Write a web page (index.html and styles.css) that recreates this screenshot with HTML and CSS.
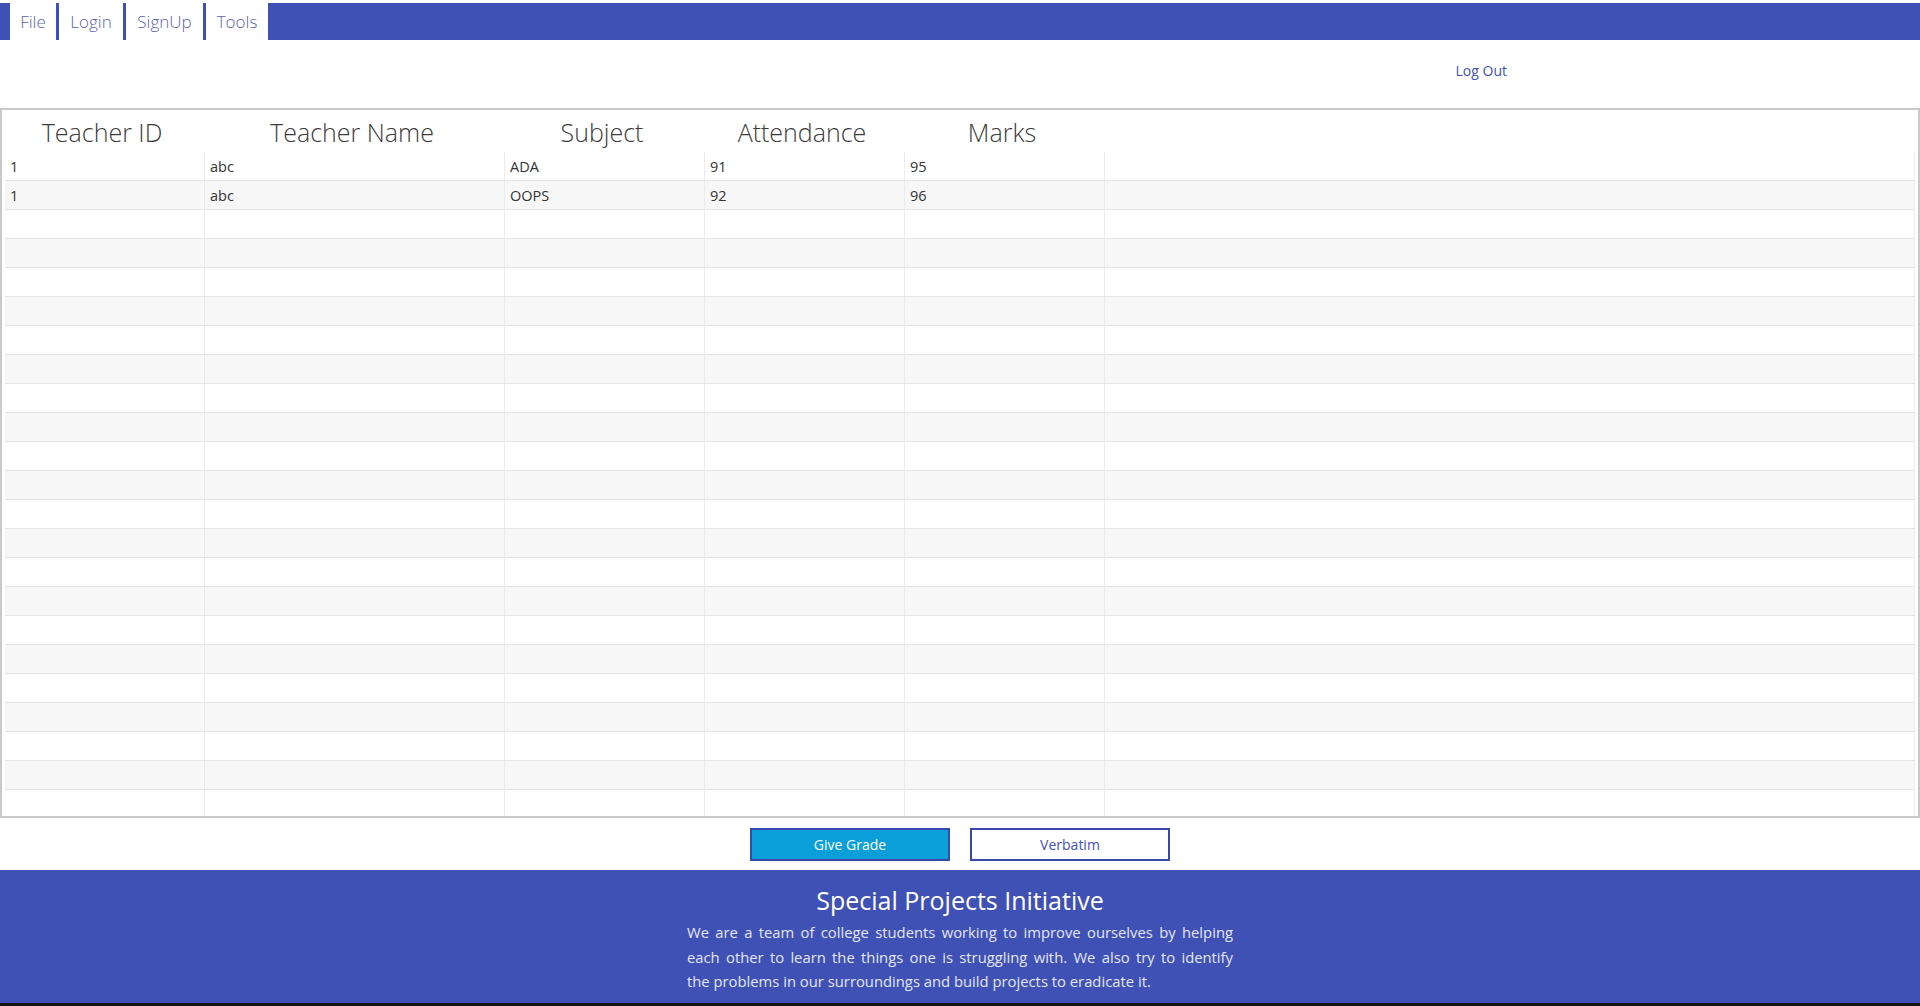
FILE: index.html
```html
<!DOCTYPE html>
<html lang="en">
<head>
<meta charset="utf-8">
<title>Teacher Records</title>
<link rel="stylesheet" href="styles.css">
</head>
<body>
<div class="page">
  <nav class="topnav">
    <a class="tab tab-file">File</a>
    <a class="tab tab-login">Login</a>
    <a class="tab tab-signup">SignUp</a>
    <a class="tab tab-tools">Tools</a>
  </nav>

  <div class="account-bar">
    <a class="logout">Log Out</a>
  </div>

  <section class="grid">
    <div class="grid-head">
      <div class="hcell c1">Teacher ID</div>
      <div class="hcell c2">Teacher Name</div>
      <div class="hcell c3">Subject</div>
      <div class="hcell c4">Attendance</div>
      <div class="hcell c5">Marks</div>
    </div>
    <div class="grid-body">
      <div class="row"><div class="cell c1">1</div><div class="cell c2">abc</div><div class="cell c3">ADA</div><div class="cell c4">91</div><div class="cell c5">95</div><div class="cell c6"></div></div>
      <div class="row"><div class="cell c1">1</div><div class="cell c2">abc</div><div class="cell c3">OOPS</div><div class="cell c4">92</div><div class="cell c5">96</div><div class="cell c6"></div></div>
      <div class="row"><div class="cell c1"></div><div class="cell c2"></div><div class="cell c3"></div><div class="cell c4"></div><div class="cell c5"></div><div class="cell c6"></div></div>
      <div class="row"><div class="cell c1"></div><div class="cell c2"></div><div class="cell c3"></div><div class="cell c4"></div><div class="cell c5"></div><div class="cell c6"></div></div>
      <div class="row"><div class="cell c1"></div><div class="cell c2"></div><div class="cell c3"></div><div class="cell c4"></div><div class="cell c5"></div><div class="cell c6"></div></div>
      <div class="row"><div class="cell c1"></div><div class="cell c2"></div><div class="cell c3"></div><div class="cell c4"></div><div class="cell c5"></div><div class="cell c6"></div></div>
      <div class="row"><div class="cell c1"></div><div class="cell c2"></div><div class="cell c3"></div><div class="cell c4"></div><div class="cell c5"></div><div class="cell c6"></div></div>
      <div class="row"><div class="cell c1"></div><div class="cell c2"></div><div class="cell c3"></div><div class="cell c4"></div><div class="cell c5"></div><div class="cell c6"></div></div>
      <div class="row"><div class="cell c1"></div><div class="cell c2"></div><div class="cell c3"></div><div class="cell c4"></div><div class="cell c5"></div><div class="cell c6"></div></div>
      <div class="row"><div class="cell c1"></div><div class="cell c2"></div><div class="cell c3"></div><div class="cell c4"></div><div class="cell c5"></div><div class="cell c6"></div></div>
      <div class="row"><div class="cell c1"></div><div class="cell c2"></div><div class="cell c3"></div><div class="cell c4"></div><div class="cell c5"></div><div class="cell c6"></div></div>
      <div class="row"><div class="cell c1"></div><div class="cell c2"></div><div class="cell c3"></div><div class="cell c4"></div><div class="cell c5"></div><div class="cell c6"></div></div>
      <div class="row"><div class="cell c1"></div><div class="cell c2"></div><div class="cell c3"></div><div class="cell c4"></div><div class="cell c5"></div><div class="cell c6"></div></div>
      <div class="row"><div class="cell c1"></div><div class="cell c2"></div><div class="cell c3"></div><div class="cell c4"></div><div class="cell c5"></div><div class="cell c6"></div></div>
      <div class="row"><div class="cell c1"></div><div class="cell c2"></div><div class="cell c3"></div><div class="cell c4"></div><div class="cell c5"></div><div class="cell c6"></div></div>
      <div class="row"><div class="cell c1"></div><div class="cell c2"></div><div class="cell c3"></div><div class="cell c4"></div><div class="cell c5"></div><div class="cell c6"></div></div>
      <div class="row"><div class="cell c1"></div><div class="cell c2"></div><div class="cell c3"></div><div class="cell c4"></div><div class="cell c5"></div><div class="cell c6"></div></div>
      <div class="row"><div class="cell c1"></div><div class="cell c2"></div><div class="cell c3"></div><div class="cell c4"></div><div class="cell c5"></div><div class="cell c6"></div></div>
      <div class="row"><div class="cell c1"></div><div class="cell c2"></div><div class="cell c3"></div><div class="cell c4"></div><div class="cell c5"></div><div class="cell c6"></div></div>
      <div class="row"><div class="cell c1"></div><div class="cell c2"></div><div class="cell c3"></div><div class="cell c4"></div><div class="cell c5"></div><div class="cell c6"></div></div>
      <div class="row"><div class="cell c1"></div><div class="cell c2"></div><div class="cell c3"></div><div class="cell c4"></div><div class="cell c5"></div><div class="cell c6"></div></div>
      <div class="row"><div class="cell c1"></div><div class="cell c2"></div><div class="cell c3"></div><div class="cell c4"></div><div class="cell c5"></div><div class="cell c6"></div></div>
      <div class="row"><div class="cell c1"></div><div class="cell c2"></div><div class="cell c3"></div><div class="cell c4"></div><div class="cell c5"></div><div class="cell c6"></div></div>
    </div>
  </section>

  <div class="actions">
    <button class="btn btn-primary">Give Grade</button>
    <button class="btn btn-outline">Verbatim</button>
  </div>

  <footer class="footer">
    <h2 class="footer-title">Special Projects Initiative</h2>
    <p class="footer-text"><span class="line line-full">We are a team of college students working to improve ourselves by helping</span> <span class="line line-full">each other to learn the things one is struggling with. We also try to identify</span> <span class="line">the problems in our surroundings and build projects to eradicate it.</span></p>
  </footer>
  <div class="baseline-strip"></div>
</div>
</body>
</html>
```

FILE: styles.css
```css
* { box-sizing: border-box; }

html, body {
  margin: 0;
  padding: 0;
  height: 100%;
  overflow: hidden;
  background: #ffffff;
  font-family: "Open Sans", "Noto Sans", "Liberation Sans", sans-serif;
}

.page {
  display: flex;
  flex-direction: column;
  height: 1006px;
}

/* ---------- top navigation ---------- */
.topnav {
  margin-top: 3px;
  height: 37px;
  background: #3f51b5;
  display: flex;
  padding-left: 10px;
  gap: 3px;
  flex-shrink: 0;
}

.tab {
  background: #ffffff;
  height: 37px;
  display: flex;
  align-items: center;
  justify-content: center;
  font-size: 17px;
  font-weight: 300;
  color: #5a63aa;
  cursor: pointer;
}

.tab-file { width: 46px; }
.tab-login { width: 64px; }
.tab-signup { width: 77px; }
.tab-tools { width: 62px; }

/* ---------- account bar ---------- */
.account-bar {
  height: 68px;
  flex-shrink: 0;
  display: flex;
  justify-content: flex-end;
  align-items: center;
  padding-right: 413px;
  padding-bottom: 8px;
}

.logout {
  font-size: 14px;
  color: #3f51b5;
  cursor: pointer;
}

/* ---------- data grid ---------- */
.grid {
  height: 710px;
  flex-shrink: 0;
  border: 2px solid #c9c9c9;
  overflow: hidden;
  display: flex;
  flex-direction: column;
}

.grid-head {
  height: 42px;
  flex-shrink: 0;
  display: flex;
  align-items: center;
}

.hcell {
  text-align: center;
  font-size: 25px;
  font-weight: 300;
  color: #3c3c3c;
  line-height: 42px;
  padding-top: 1px;
}

.grid-head .c1 { width: 200px; }
.grid-head .c2 { width: 300px; }
.grid-head .c3 { width: 200px; }
.grid-head .c4 { width: 200px; }
.grid-head .c5 { width: 200px; }

.grid-body {
  margin: 0 3px;
  flex: 1;
  overflow: hidden;
  border-right: 1px solid #ececec;
}

.row {
  height: 29px;
  display: flex;
  border-bottom: 1px solid #e4e4e4;
}

.row:nth-child(even) { background: #f7f7f7; }

.cell {
  height: 100%;
  padding-left: 5px;
  display: flex;
  align-items: center;
  font-size: 14.5px;
  color: #333333;
  border-right: 1px solid #ebebeb;
}

.cell.c1 { width: 200px; }
.cell.c2 { width: 300px; }
.cell.c3 { width: 200px; }
.cell.c4 { width: 200px; }
.cell.c5 { width: 200px; }
.cell.c6 { flex: 1; border-right: none; }

/* ---------- action buttons ---------- */
.actions {
  height: 52px;
  flex-shrink: 0;
  display: flex;
  justify-content: center;
  align-items: flex-start;
  padding-top: 10px;
  gap: 20px;
}

.btn {
  width: 200px;
  height: 33px;
  border: 2px solid #3949ab;
  font-family: "Open Sans", "Noto Sans", "Liberation Sans", sans-serif;
  font-size: 14px;
  cursor: pointer;
}

.btn-primary {
  background: #0a9fd8;
  color: #ffffff;
}

.btn-outline {
  background: #ffffff;
  color: #3f51b5;
}

/* ---------- footer ---------- */
.footer {
  height: 133px;
  flex-shrink: 0;
  background: #3f51b5;
  display: flex;
  flex-direction: column;
  align-items: center;
  padding-top: 13px;
}

.footer-title {
  margin: 0;
  font-size: 25px;
  font-weight: 400;
  line-height: 34px;
  color: #ffffff;
}

.footer-text {
  margin: 3px 0 0;
  width: 546px;
  font-size: 14.8px;
  line-height: 24.5px;
  color: #e4e6f4;
}

.line {
  display: block;
  white-space: nowrap;
}

.line-full {
  text-align: justify;
  text-align-last: justify;
}

.baseline-strip {
  height: 3px;
  flex-shrink: 0;
  background: #141414;
}
```
